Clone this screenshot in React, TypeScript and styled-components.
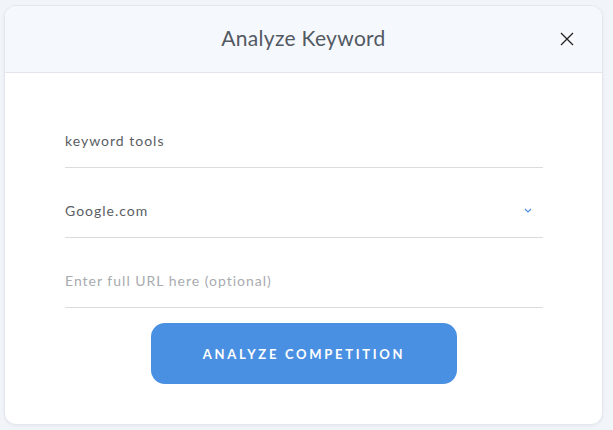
import React from 'react';
import styled, { createGlobalStyle } from 'styled-components';

const GlobalStyle = createGlobalStyle`
    html, body {
        margin: 0;
        padding: 0;
        background: #f1f4f9;
        font-family: Lato, "Open Sans", sans-serif;
    }
`;

const Page = styled.div`
    width: 613px;
    height: 430px;
    padding: 5px 0 0 4px;
    box-sizing: border-box;
    overflow: hidden;
`;

const Modal = styled.div`
    width: 599px;
    height: 420px;
    background: #ffffff;
    border: 1px solid #e4e8ee;
    border-radius: 12px;
    box-sizing: border-box;
    overflow: hidden;
    display: flex;
    flex-direction: column;
    box-shadow: 0 1px 3px rgba(40, 60, 90, 0.06);
`;

const Header = styled.div`
    position: relative;
    height: 67px;
    flex-shrink: 0;
    background: #f5f8fc;
    border-bottom: 1px solid #e3e7ed;
    display: flex;
    align-items: center;
    justify-content: center;
    box-sizing: border-box;
`;

const Title = styled.h2`
    margin: 0 0 4px;
    font-size: 21px;
    font-weight: 400;
    color: #535962;
    letter-spacing: 0.3px;
`;

const CloseButton = styled.button`
    position: absolute;
    right: 23px;
    top: 21px;
    width: 24px;
    height: 24px;
    padding: 0;
    border: 0;
    background: transparent;
    display: flex;
    align-items: center;
    justify-content: center;
    cursor: pointer;
`;

const Body = styled.div`
    padding: 25px 59px 0 60px;
    display: flex;
    flex-direction: column;
`;

const Field = styled.div`
    position: relative;
    height: 70px;
    box-sizing: border-box;
    display: flex;
    align-items: flex-end;
    border-bottom: 1px solid #dcdcdc;
`;

const Input = styled.input`
    width: 100%;
    height: 52px;
    line-height: 52px;
    padding: 0;
    border: 0;
    outline: none;
    background: transparent;
    font-family: Lato, "Open Sans", sans-serif;
    font-size: 14px;
    letter-spacing: 1px;
    color: #5a5e64;

    &::placeholder {
        color: #a8abb0;
    }
`;

const Chevron = styled.span`
    position: absolute;
    right: 11px;
    bottom: 24px;
    display: flex;
`;

const Actions = styled.div`
    display: flex;
    justify-content: center;
    padding-top: 15px;
`;

const PrimaryButton = styled.button`
    width: 306px;
    height: 61px;
    border: 0;
    border-radius: 14px;
    background: #4a90e2;
    color: #ffffff;
    font-family: Lato, "Open Sans", sans-serif;
    font-size: 13px;
    font-weight: 700;
    letter-spacing: 2.7px;
    cursor: pointer;
`;

export default function App() {
    return (
        <>
            <GlobalStyle />
            <Page>
                <Modal>
                    <Header>
                        <Title>Analyze Keyword</Title>
                        <CloseButton aria-label="Close">
                            <svg width="14" height="14" viewBox="0 0 14 14">
                                <path d="M1 1L13 13M13 1L1 13" stroke="#222" strokeWidth="1.3" />
                            </svg>
                        </CloseButton>
                    </Header>
                    <Body>
                        <Field>
                            <Input defaultValue="keyword tools" />
                        </Field>
                        <Field>
                            <Input defaultValue="Google.com" readOnly />
                            <Chevron>
                                <svg width="8" height="5" viewBox="0 0 8 5">
                                    <path d="M1 1L4 4L7 1" stroke="#4a90e2" strokeWidth="1.2" fill="none" />
                                </svg>
                            </Chevron>
                        </Field>
                        <Field>
                            <Input placeholder="Enter full URL here (optional)" />
                        </Field>
                        <Actions>
                            <PrimaryButton>ANALYZE COMPETITION</PrimaryButton>
                        </Actions>
                    </Body>
                </Modal>
            </Page>
        </>
    );
}
